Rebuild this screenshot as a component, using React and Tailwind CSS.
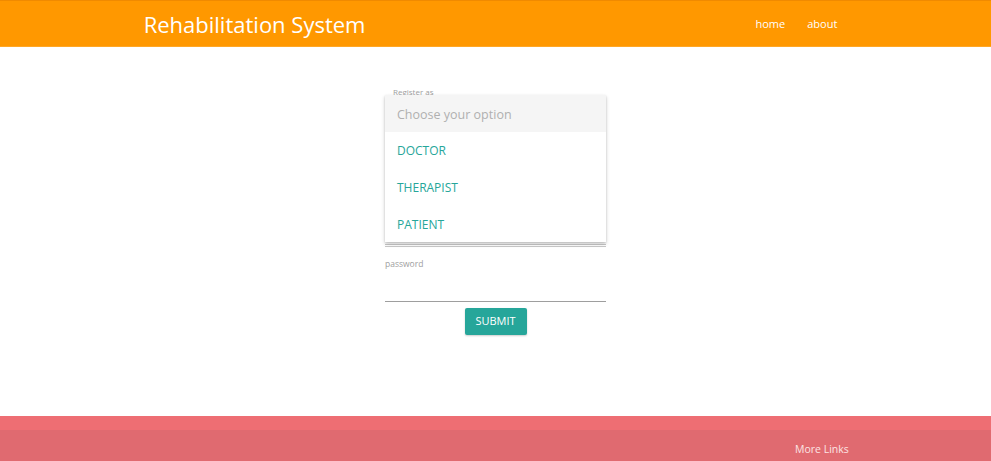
import React from 'react';

const options = ['DOCTOR', 'THERAPIST', 'PATIENT'];

export default function App() {
  return (
    <div className="flex min-h-[461px] flex-col bg-white font-['Open_Sans',sans-serif]">
      <nav className="h-[47px] border-t border-[#f08a00] border-b border-b-[#ffa726] bg-[#ff9800]">
        <div className="mx-auto flex h-full w-[70%] items-center justify-between">
          <a className="ml-[-5px] text-[22px] leading-none text-white">Rehabilitation System</a>
          <ul className="mr-[5px] mt-[2px] flex gap-[22px] text-[11px] text-white">
            <li>home</li>
            <li>about</li>
          </ul>
        </div>
      </nav>

      <main className="flex-1">
        <div className="mx-auto w-[221px] pt-[40px]">
          <label className="ml-[8px] block text-[8px] leading-[10px] text-[#9e9e9e]">Register as</label>
          <div className="relative h-[150px] border-b-[3px] border-double border-[#c8c8c8]">
            <ul className="absolute inset-x-0 top-[-2px] bg-white shadow-[0_2px_4px_rgba(0,0,0,0.18),0_1px_2px_rgba(0,0,0,0.14)]">
              <li className="flex h-[37px] items-center bg-[#f5f5f5] px-[12px] pt-[3px] text-[12.5px] text-[#b0b0b0]">Choose your option</li>
              {options.map(o => (
                <li key={o} className="flex h-[36.7px] items-center px-[12px] pt-[2px] text-[12px] text-[#26a69a]">{o}</li>
              ))}
            </ul>
          </div>
          <label className="mt-[12px] block text-[8.5px] leading-[10px] text-[#9e9e9e]">password</label>
          <div className="h-[33px] border-b border-[#9e9e9e]"></div>
          <div className="mt-[6px] flex justify-center">
            <button className="h-[27px] w-[62px] rounded-[2px] bg-[#26a69a] text-[11px] text-white shadow-[0_1px_2px_rgba(0,0,0,0.2)]">SUBMIT</button>
          </div>
        </div>
      </main>

      <footer className="h-[45px] bg-[#ee6e73]">
        <div className="mt-[14px] h-[31px] bg-[#e06a70] pt-[12px]">
          <span className="ml-[795px] block text-[10.5px] leading-[14px] text-[#fce4e4]">More Links</span>
        </div>
      </footer>
    </div>
  );
}
